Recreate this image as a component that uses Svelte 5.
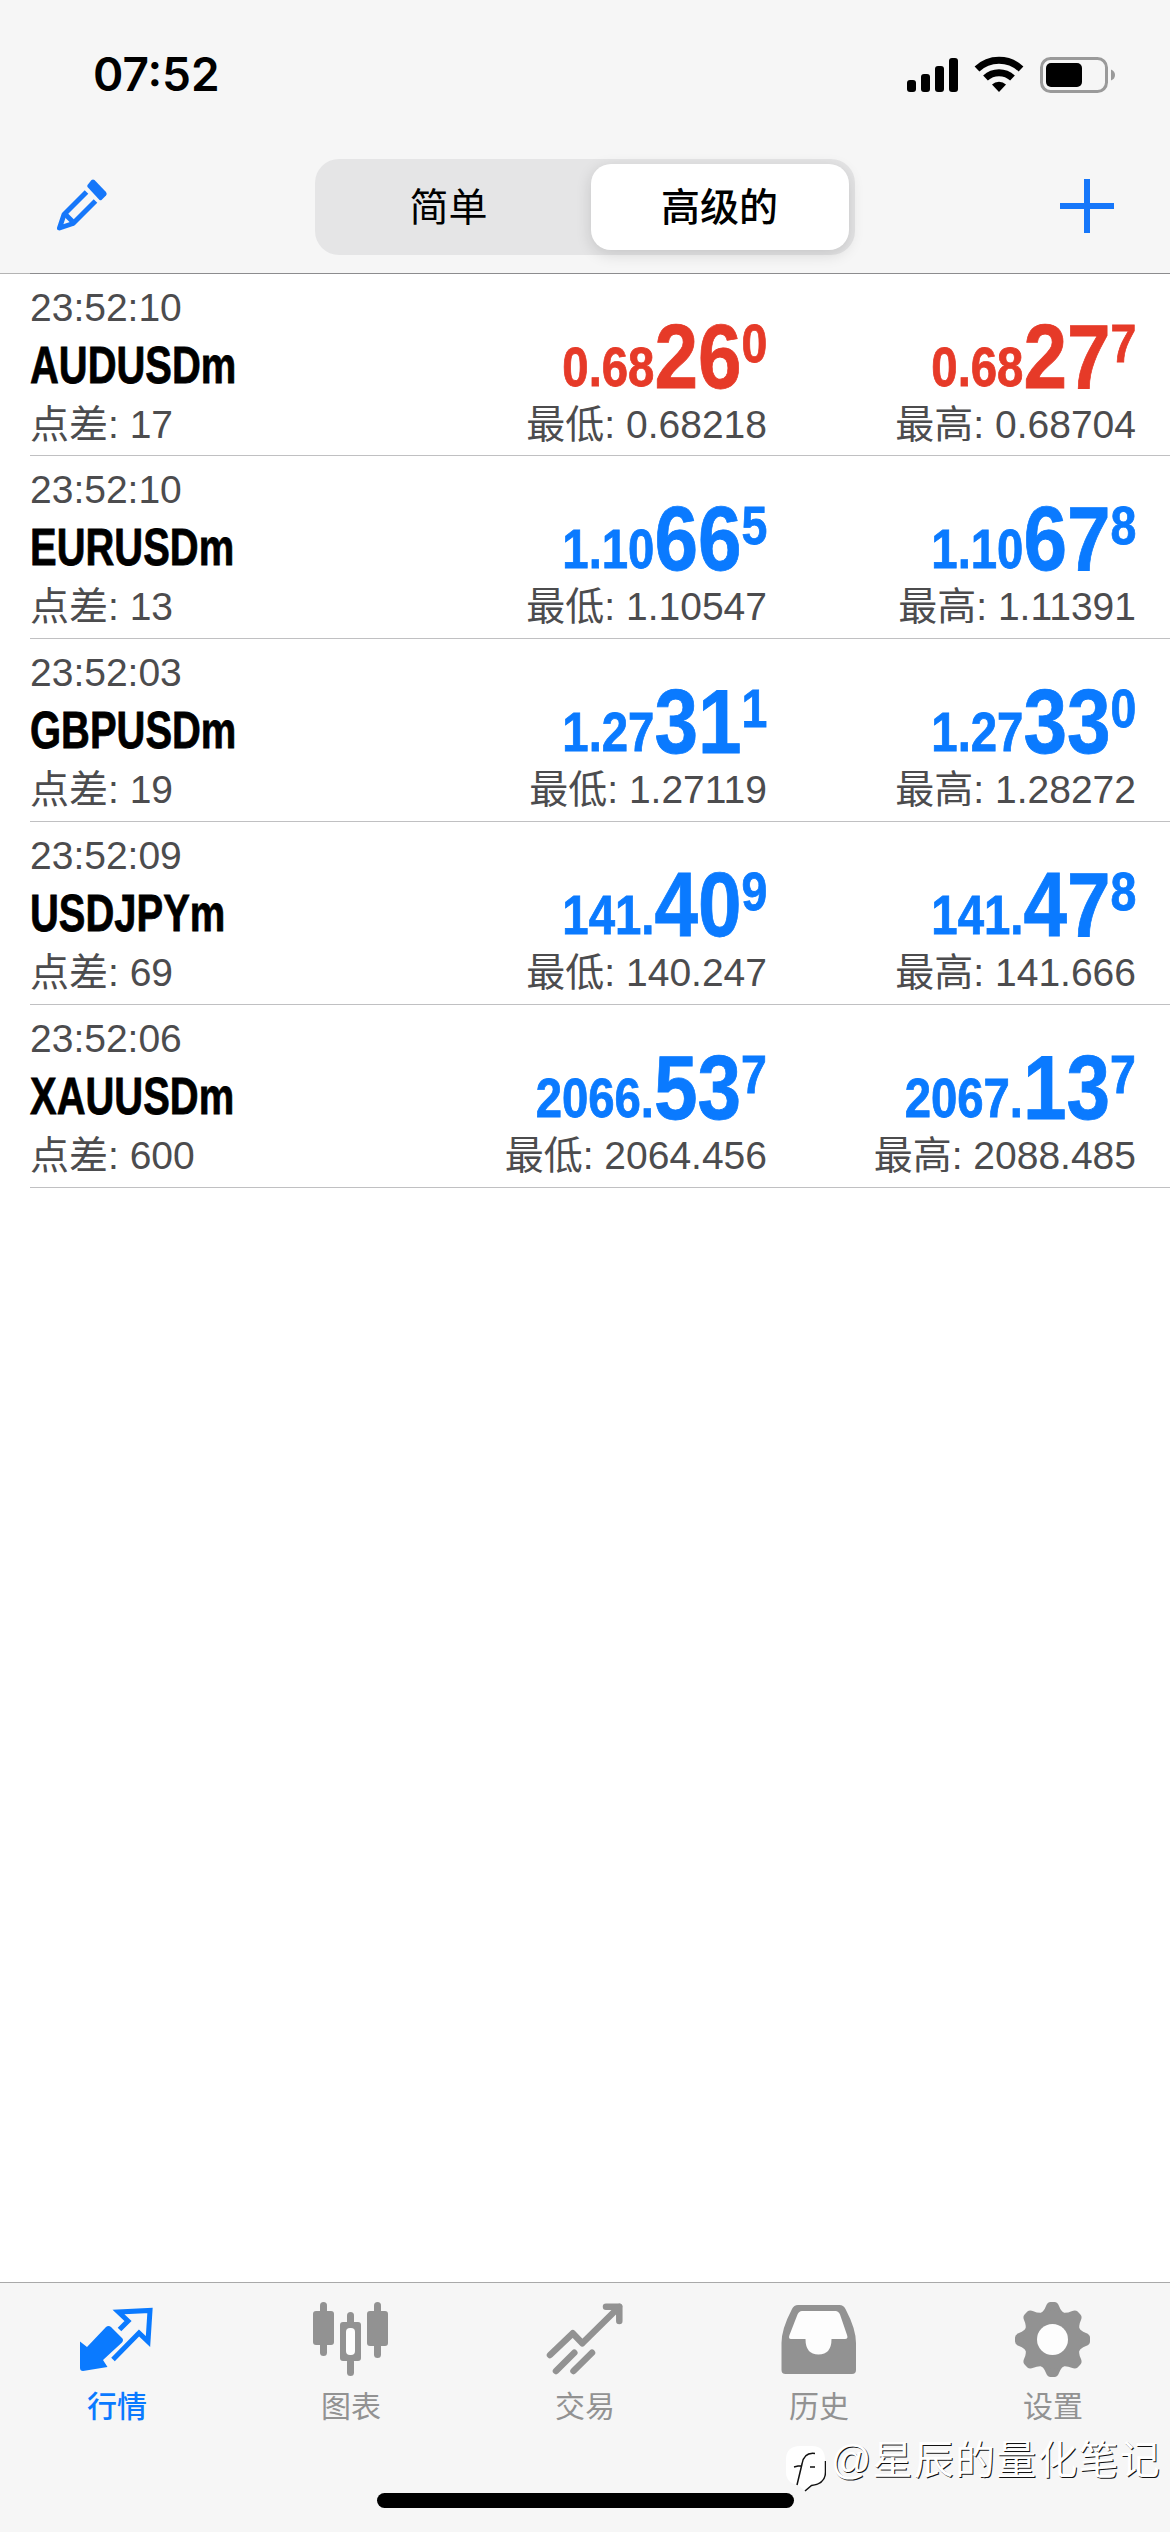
<script lang="ts">
  interface Price {
    base: string;
    big: string;
    sup: string;
  }

  interface Quote {
    time: string;
    symbol: string;
    spread: string;
    dir: 'up' | 'down';
    bid: Price;
    ask: Price;
    low: string;
    high: string;
  }

  const quotes: Quote[] = [
    { time: '23:52:10', symbol: 'AUDUSDm', spread: '17', dir: 'down', bid: { base: '0.68', big: '26', sup: '0' }, ask: { base: '0.68', big: '27', sup: '7' }, low: '0.68218', high: '0.68704' },
    { time: '23:52:10', symbol: 'EURUSDm', spread: '13', dir: 'up', bid: { base: '1.10', big: '66', sup: '5' }, ask: { base: '1.10', big: '67', sup: '8' }, low: '1.10547', high: '1.11391' },
    { time: '23:52:03', symbol: 'GBPUSDm', spread: '19', dir: 'up', bid: { base: '1.27', big: '31', sup: '1' }, ask: { base: '1.27', big: '33', sup: '0' }, low: '1.27119', high: '1.28272' },
    { time: '23:52:09', symbol: 'USDJPYm', spread: '69', dir: 'up', bid: { base: '141.', big: '40', sup: '9' }, ask: { base: '141.', big: '47', sup: '8' }, low: '140.247', high: '141.666' },
    { time: '23:52:06', symbol: 'XAUUSDm', spread: '600', dir: 'up', bid: { base: '2066.', big: '53', sup: '7' }, ask: { base: '2067.', big: '13', sup: '7' }, low: '2064.456', high: '2088.485' }
  ];

  const tabs = [
    { id: 'quotes', label: '行情' },
    { id: 'chart', label: '图表' },
    { id: 'trade', label: '交易' },
    { id: 'history', label: '历史' },
    { id: 'settings', label: '设置' }
  ];

  const teeth = [0, 45, 90, 135, 180, 225, 270, 315];

  let mode = $state('advanced');
  let activeTab = $state('quotes');
</script>

{#snippet price(p: Price)}
  <div class="price">
    <span class="base">{p.base}</span><span class="big">{p.big}</span><span class="sup">{p.sup}</span>
  </div>
{/snippet}

<div class="screen">
  <header>
    <div class="status">
      <span class="clock">07:52</span>
      <svg class="status-icons" width="210" height="40" viewBox="0 0 210 40">
        <rect x="1" y="25" width="9" height="12" rx="3" />
        <rect x="15" y="19" width="9" height="18" rx="3" />
        <rect x="29" y="11" width="9" height="26" rx="3" />
        <rect x="43" y="3" width="9" height="34" rx="3" />
        <g fill="none" stroke="#000" stroke-width="7">
          <path d="M71 14a32 32 0 0 1 44 0" />
          <path d="M79.500 23a20 20 0 0 1 27 0" />
        </g>
        <path d="M93 37l-7-7.500a10 10 0 0 1 14 0z" />
        <rect x="135.500" y="3.500" width="65" height="33" rx="9" fill="none" stroke="#9a9a9a" stroke-width="3" />
        <rect x="140" y="8" width="36" height="24" rx="5" />
        <path d="M205 14.500q4 1.500 4 5.500t-4 5.500z" fill="#9a9a9a" />
      </svg>
    </div>
    <nav>
      <button class="icon-btn" aria-label="edit">
        <svg width="54" height="54" viewBox="0 0 54 54">
          <path d="M39.500 1L51 13q1.500 2 0 3.500L46.500 21q-1 .5-2 0L32.500 8q-.5-1 0-2l4-5q1.500-1 3 0z" />
          <path d="M31.500 13L9 35.500 4.500 49 18 44.500 40.500 22" class="outline" />
          <path d="M9 34l11 11" class="outline" />
        </svg>
      </button>
      <div class="segmented">
        <button class:selected={mode === 'simple'} onclick={() => (mode = 'simple')}>简单</button>
        <button class:selected={mode === 'advanced'} onclick={() => (mode = 'advanced')}>高级的</button>
      </div>
      <button class="icon-btn" aria-label="add">
        <svg width="54" height="54" viewBox="0 0 54 54">
          <path d="M27 0v54M0 27h54" class="plus" />
        </svg>
      </button>
    </nav>
  </header>

  <ul class="quotes">
    {#each quotes as q}
      <li class={q.dir}>
        <div class="info">
          <span class="small">{q.time}</span>
          <span class="symbol">{q.symbol}</span>
          <span class="small">点差: {q.spread}</span>
        </div>
        <div class="side">
          {@render price(q.bid)}
          <span class="small">最低: {q.low}</span>
        </div>
        <div class="side">
          {@render price(q.ask)}
          <span class="small">最高: {q.high}</span>
        </div>
      </li>
    {/each}
  </ul>

  <footer>
    <div class="tabs">
      {#each tabs as tab}
        <button class="tab" class:active={activeTab === tab.id} onclick={() => (activeTab = tab.id)}>
          <svg width="78" height="78" viewBox="0 0 78 78">
            {#if tab.id === 'quotes'}
              <path d="M2 40.500l7 5.500 19-20q2.500-2 5 0l11 11q2 2 0 4.500L25 59l4.500 7-24.500 4q-3 0-3-3z" />
              <path d="M41.500 28.500l8.500-8.500-9.500-9 31.500-1.500-2 31-9-8.500-26 26.500" class="arrow" />
            {:else if tab.id === 'chart'}
              <rect x="1" y="10" width="21" height="34" rx="3" />
              <rect x="8" y="1" width="7" height="54" rx="3.500" />
              <rect x="28" y="21" width="21" height="39" rx="3" />
              <rect x="35" y="11" width="7" height="14" rx="3.500" />
              <rect x="35" y="57" width="7" height="18" rx="3.500" />
              <rect x="34" y="27" width="9" height="27" rx="4" class="hole" />
              <rect x="55" y="10" width="21" height="35" rx="3" />
              <rect x="62" y="1" width="7" height="56" rx="3.500" />
            {:else if tab.id === 'trade'}
              <path d="M4 54l22.700-21.700 9.600 10L73.300 5.700M60 5.700h13.300V20M10 70l18.300-18.300M27.500 70L46 51.700" class="stroke" />
            {:else if tab.id === 'history'}
              <path d="M18 4h41.500q4 0 6 4Q76 28 76 42v27q0 4-4 4H5.500q-4 0-4-4V42Q1.500 28 12 8q2-4 6-4z" />
              <path d="M22 10q-3 0-4.500 3.500L9.500 34q-1.500 4 1.500 4h14.500q0 15.500 13 15.500T51.500 38H65q3.500 0 2-4l-7-20.500Q58.500 10 55.500 10z" class="hole" />
            {:else}
              {#each teeth as angle}
                <path d="M24 14q6-3 8-9 1.500-4 4.500-4h4q3 0 4.500 4 2 6 8 9z" transform="rotate({angle} 38.500 38.500)" />
              {/each}
              <circle cx="38.500" cy="38.500" r="29" />
              <circle cx="38.500" cy="38.500" r="15.500" class="hole" />
            {/if}
          </svg>
          <span>{tab.label}</span>
        </button>
      {/each}
    </div>
    <div class="home"></div>
    <div class="watermark">
      <svg width="40" height="48" viewBox="0 0 40 48">
        <path d="M14 1h12q13 0 13 14v12q0 12-14 13.500L19 46l-7-6Q0 38 0 27V15Q0 1 14 1z" fill="#fff" />
        <path d="M29 8.500q-11-1.500-13 10.500L11 40M8 22l4-1h3M24 22h5M39.500 16v11q0 12-14 13.500L19 46" fill="none" stroke="#111" stroke-width="1.500" />
      </svg>
      <span>@星辰的量化笔记</span>
    </div>
  </footer>
</div>

<style>
  :global(body) {
    margin: 0;
    background: #fff;
  }

  .screen {
    width: 1170px;
    height: 2532px;
    display: flex;
    flex-direction: column;
    background: #fff;
    font-family: 'Liberation Sans', 'Noto Sans CJK SC', sans-serif;
    overflow: hidden;
  }

  button {
    border: none;
    background: none;
    padding: 0;
    font: inherit;
    color: inherit;
  }

  header {
    height: 273px;
    background: #f6f6f6;
    border-bottom: 1px solid #b4b4b4;
  }

  .status {
    height: 150px;
    box-sizing: border-box;
    padding: 47px 54px 0 93px;
    display: flex;
    justify-content: space-between;
    align-items: flex-start;
  }

  .clock {
    font: 600 46px/54px Inter, sans-serif;
  }

  .status-icons {
    margin-top: 8px;
  }

  nav {
    display: flex;
    justify-content: space-between;
    padding: 9px 56px 0 55px;
  }

  .icon-btn {
    width: 54px;
    height: 94px;
    fill: #1677fa;
  }

  .icon-btn svg {
    display: block;
    overflow: visible;
  }

  .outline,
  .plus {
    fill: none;
    stroke: #1677fa;
    stroke-width: 5;
    stroke-linejoin: round;
  }

  .plus {
    stroke-width: 6;
  }

  .segmented {
    width: 540px;
    height: 96px;
    box-sizing: border-box;
    padding: 5px 6px;
    display: grid;
    grid-template-columns: 256px 258px;
    justify-content: space-between;
    border-radius: 24px;
    background: #e5e5e6;
  }

  .segmented button {
    height: 86px;
    padding-bottom: 6px;
    font: 400 39px/80px 'Noto Sans CJK SC', sans-serif;
    border-radius: 20px;
  }

  .segmented .selected {
    background: #fff;
    font-weight: 500;
    box-shadow: 0 4px 16px rgba(0, 0, 0, 0.14);
  }

  .quotes {
    list-style: none;
    margin: -1px 0 0 30px;
    padding: 0;
    flex: 1;
  }

  li {
    display: grid;
    grid-template-columns: 1fr 369px 369px;
    height: 182px;
    padding-right: 34px;
    border-bottom: 1px solid #c0c0c2;
  }

  li:first-child {
    height: 181px;
    border-top: 1px solid #8c8c8e;
  }

  .info,
  .side {
    display: flex;
    flex-direction: column;
  }

  .info {
    padding-top: 8px;
  }

  .side {
    align-items: flex-end;
    padding-top: 22px;
  }

  .small {
    font-size: 39px;
    line-height: 51px;
    height: 50px;
    color: #4c4c4e;
    white-space: nowrap;
  }

  .symbol {
    height: 67px;
    font-size: 52px;
    font-weight: 700;
    line-height: 67px;
    -webkit-text-stroke: 0.8px;
    transform: scaleX(0.768);
    transform-origin: left;
  }

  .price {
    height: 103px;
    font-weight: 700;
    font-size: 55px;
    line-height: 121px;
    white-space: nowrap;
    -webkit-text-stroke: 0.8px;
    transform: scaleX(0.86);
    transform-origin: right;
  }

  .base {
    vertical-align: 2px;
    line-height: 0;
  }

  .big {
    font-size: 91px;
  }

  .sup {
    font-size: 54px;
    vertical-align: 26px;
    line-height: 0;
  }

  .up .price {
    color: #0a7aff;
  }

  .down .price {
    color: #e63a28;
  }

  footer {
    position: relative;
    height: 249px;
    background: #f6f6f6;
    border-top: 1px solid #a9a9a9;
  }

  .tabs {
    display: grid;
    grid-template-columns: repeat(5, 1fr);
  }

  .tab {
    display: flex;
    flex-direction: column;
    align-items: center;
    padding-top: 18px;
    color: #929292;
    fill: currentColor;
    font: 400 30px/44px 'Noto Sans CJK SC', sans-serif;
  }

  .tab svg {
    overflow: visible;
    margin-bottom: 3px;
  }

  .tab.active {
    color: #0a7aff;
    font-weight: 500;
  }

  .arrow,
  .stroke {
    fill: none;
    stroke: currentColor;
    stroke-width: 5;
  }

  .stroke {
    stroke-width: 6.5;
    stroke-linecap: round;
    stroke-linejoin: round;
  }

  .hole {
    fill: #fdfdfd;
  }

  .home {
    width: 417px;
    height: 15px;
    margin: 67px auto 0;
    border-radius: 8px;
    background: #000;
  }

  /* sits over the bar and the home indicator */
  .watermark {
    position: absolute;
    right: 9px;
    top: 144px;
    display: flex;
    align-items: center;
    gap: 5px;
    color: #fff;
    font: 400 40px/56px 'Liberation Sans', 'Noto Sans CJK SC', sans-serif;
    letter-spacing: 1.2px;
    text-shadow: 1px 1px 0 #111;
  }

  .watermark svg {
    margin-top: 18px;
  }
</style>
